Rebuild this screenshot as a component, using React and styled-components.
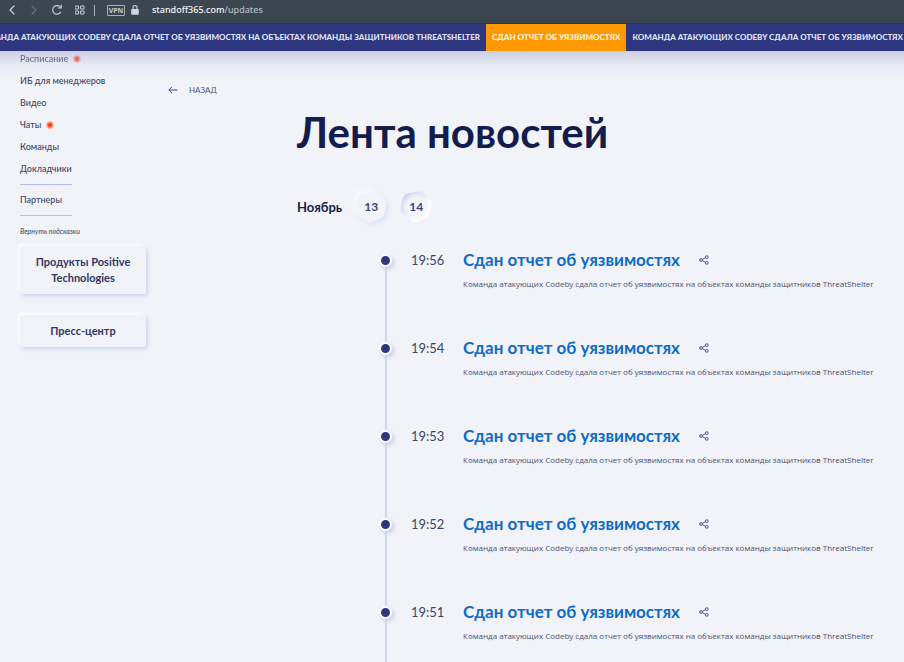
import React from "react";
import styled, { createGlobalStyle } from "styled-components";

const GlobalStyle = createGlobalStyle`
  * { box-sizing: border-box; }
  body {
    margin: 0;
    background: #f1f3f8;
    color: #3d4468;
    font-family: Lato, "Open Sans", sans-serif;
    overflow: hidden;
  }
  a { color: inherit; text-decoration: none; }
  button { border: 0; padding: 0; background: none; font: inherit; color: inherit; cursor: pointer; }
`;

const Page = styled.div`
  display: flex;
  flex-direction: column;
  min-height: 100vh;
`;

const AddressBar = styled.header`
  display: flex;
  align-items: center;
  height: 24px;
  padding: 0 8px 3px;
  background: #3b4651;
  color: #c5cad0;
  border-bottom: 1px solid #2a3045;
`;

const BrowserButton = styled.button`
  display: flex;
  width: ${(p) => p.$width}px;
  margin-right: ${(p) => p.$gap}px;
  color: ${(p) => (p.$muted ? "#67717b" : "#c9ced3")};
`;

const BarDivider = styled.span`
  width: 1px;
  height: 11px;
  margin-right: 12px;
  background: #a9b0b7;
`;

const VpnBadge = styled.span`
  width: 18px;
  height: 11px;
  margin-right: 6px;
  border: 1px solid #a9b0b7;
  border-radius: 1px;
  font: 700 7px/9px "Open Sans", sans-serif;
  text-align: center;
`;

const Address = styled.span`
  margin-left: 13px;
  font: 500 9px/14px "Noto Sans", sans-serif;
  color: #b4bac1;
`;

const Host = styled.span`
  color: #f5f6f7;
`;

const Ticker = styled.div`
  position: relative;
  z-index: 1;
  display: flex;
  height: 27px;
  overflow: hidden;
  background: #2d367f;
`;

const TickerShade = styled.div`
  position: relative;
  z-index: 1;
  height: 28px;
  margin-bottom: -28px;
  background: linear-gradient(rgba(45, 56, 140, 0.2), rgba(110, 120, 190, 0.07) 50%, rgba(241, 243, 248, 0));
  pointer-events: none;
`;

const TickerItem = styled.span`
  display: flex;
  flex: none;
  align-items: center;
  justify-content: flex-end;
  width: ${(p) => (p.$leading ? "486px" : "auto")};
  padding: 0 6px 2px;
  overflow: hidden;
  background: ${(p) => (p.$accent ? "#ff9900" : "transparent")};
  color: ${(p) => (p.$accent ? "#fff3df" : "#dfe2f2")};
  font-size: 8px;
  line-height: 12px;
  font-weight: 900;
  text-transform: uppercase;
  white-space: nowrap;
`;

const Body = styled.div`
  display: grid;
  grid-template-columns: 148px minmax(0, 1fr);
  column-gap: 20px;
`;

const Sidebar = styled.aside`
  padding-left: 20px;
`;

const Menu = styled.nav`
  display: flex;
  flex-direction: column;
  align-items: flex-start;
  gap: 6px;
`;

const MenuLink = styled.a`
  display: flex;
  align-items: center;
  gap: 5px;
  font-size: 9px;
  line-height: 16px;
  font-weight: 500;
  color: #3d4468;
  opacity: ${(p) => (p.$faded ? 0.75 : 1)};
`;

const LiveDot = styled.span`
  width: 8px;
  height: 8px;
  border-radius: 50%;
  background: radial-gradient(circle, #ff3d14 0 25%, #ff9a86 50%, #ffd3ca 72%);
`;

const MenuRule = styled.hr`
  width: 52px;
  height: 1px;
  margin: 1px 0;
  border: 0;
  background: #b4bbf0;
`;

const HintsButton = styled.button`
  display: block;
  margin-top: 9px;
  font-size: 7px;
  line-height: 10px;
  font-style: italic;
  font-weight: 500;
  color: #4a5073;
`;

const SideButton = styled.button`
  display: block;
  width: 126px;
  margin-top: ${(p) => (p.$first ? 10 : 21)}px;
  padding: 8px 12px;
  border-radius: 3px;
  background: #f1f3f8;
  box-shadow: 2px 2px 4px #cdd3ec, -2px -2px 3px #ffffff;
  font-size: 11px;
  line-height: 16px;
  font-weight: 700;
  color: #303764;
`;

const Main = styled.main`
  padding-top: 27px;
`;

const BackLink = styled.a`
  display: inline-flex;
  align-items: center;
  gap: 11px;
  height: 16px;
  font-size: 8px;
  line-height: 16px;
  color: #4d5478;
`;

const Content = styled.div`
  padding-left: 129px;
`;

const Title = styled.h1`
  margin: 6px 0 0;
  font-size: 42px;
  line-height: 56px;
  font-weight: 700;
  color: #141b4d;
`;

const DateFilter = styled.div`
  display: flex;
  align-items: center;
  gap: 13px;
  height: 32px;
  margin-top: 31px;
`;

const Month = styled.span`
  font-size: 13px;
  line-height: 16px;
  font-weight: 700;
  color: #141b4d;
`;

const DayButton = styled.button`
  display: grid;
  place-items: center;
  width: 32px;
  height: 32px;
  font-size: 12px;
  line-height: 16px;
  font-weight: 700;
  color: #3c437b;

  > * { grid-area: 1 / 1; }
  svg { overflow: visible; }
`;

const DayNumber = styled.span`
  z-index: 1;
`;

const Feed = styled.ol`
  margin: 19px 0 0;
  padding: 0 0 0 81px;
  list-style: none;
`;

const Entry = styled.li`
  display: grid;
  grid-template-columns: 14px 33px minmax(0, 1fr);
  column-gap: 19px;
  height: 88px;
`;

const Rail = styled.div`
  display: flex;
  flex-direction: column;
  align-items: center;
  background: linear-gradient(#d0d7e9, #d0d7e9) 7px ${(p) => (p.$first ? 16 : 0)}px / 2px 100% no-repeat;
`;

const RailDot = styled.span`
  width: 13px;
  height: 13px;
  margin-top: 12px;
  border: 2px solid #ffffff;
  border-radius: 50%;
  background: #2d367f;
  box-shadow: 2px 2px 4px #c5cce8;
`;

const Time = styled.time`
  font-size: 13px;
  line-height: 36px;
  color: #3d4468;
`;

const Story = styled.article`
  min-width: 0;
`;

const StoryHead = styled.div`
  display: flex;
  align-items: center;
  gap: 19px;
  height: 36px;
`;

const StoryTitle = styled.h2`
  margin: 0;
  font-size: 17px;
  line-height: 24px;
  font-weight: 700;
  color: #0f6bc4;
  white-space: nowrap;
`;

const ShareButton = styled.button`
  display: flex;
`;

const StoryText = styled.p`
  margin: 0;
  font-family: "Open Sans", Lato, sans-serif;
  font-size: 8px;
  line-height: 12px;
  color: #4a5073;
  white-space: nowrap;
`;

const HEXAGON = "M8.5 2.3 L19 0.5 Q22 0.1 24 2.2 L30 9 Q32 11.5 31.3 14.5 L29.3 23 Q28.6 26 26 27.1 L17.5 30.8 Q14.5 32 12 30 L3 23 Q0.4 21 0.8 18 L2.6 7.5 Q3.3 3.5 8.5 2.3 Z";

function DayShape({ pressed }) {
  return (
    <svg width="32" height="32" viewBox="0 0 32 32" aria-hidden="true">
      <defs>
        <filter id="raised" x="-40%" y="-40%" width="180%" height="180%">
          <feDropShadow dx="-3" dy="-3" stdDeviation="2.5" floodColor="#ffffff" floodOpacity="0.8" />
          <feDropShadow dx="2" dy="2" stdDeviation="2" floodColor="#cfd5f0" floodOpacity="0.7" />
        </filter>
        <filter id="soften" x="-20%" y="-20%" width="140%" height="140%">
          <feGaussianBlur stdDeviation="2" />
        </filter>
        <linearGradient id="edge" x1="0.1" y1="0.1" x2="0.9" y2="0.9">
          <stop offset="0" stopColor="#c9cff0" />
          <stop offset="0.45" stopColor="#e6e9f7" />
          <stop offset="0.65" stopColor="#ffffff" />
        </linearGradient>
        <clipPath id="inside"><path d={HEXAGON} /></clipPath>
      </defs>
      {pressed ? (
        <g clipPath="url(#inside)">
          <rect width="32" height="32" fill="url(#edge)" />
          <circle cx="16" cy="16" r="12" fill="#f3f4fa" filter="url(#soften)" />
        </g>
      ) : (
        <path d={HEXAGON} fill="#f2f4f9" filter="url(#raised)" />
      )}
    </svg>
  );
}

const stroke = { fill: "none", stroke: "currentColor", strokeLinecap: "round", strokeLinejoin: "round" };

const ChevronLeft = () => (
  <svg width="8" height="10" viewBox="0 0 8 10" {...stroke} strokeWidth="1.2"><path d="M6 1 L2 5 L6 9" /></svg>
);
const ChevronRight = () => (
  <svg width="8" height="10" viewBox="0 0 8 10" {...stroke} strokeWidth="1.2"><path d="M2 1 L6 5 L2 9" /></svg>
);
const Reload = () => (
  <svg width="12" height="12" viewBox="0 0 12 12" {...stroke} strokeWidth="1.2">
    <path d="M9.6 8.2 A4.3 4.3 0 1 1 9.7 3.7" />
    <path d="M10.2 1 V4 H7.2" />
  </svg>
);
const Grid = () => (
  <svg width="10" height="10" viewBox="0 0 10 10" {...stroke} strokeWidth="1">
    <path d="M0.5 1h3v3h-3z M6 1h3v3h-3z M0.5 6h3v3h-3z M6 6h3v3h-3z" />
  </svg>
);
const Lock = () => (
  <svg width="8" height="10" viewBox="0 0 8 10" aria-hidden="true">
    <rect x="0.2" y="4" width="7.6" height="5.8" rx="0.8" fill="#d3d7db" />
    <path d="M2 4.5 V2.6 a2 2 0 0 1 4 0 V4.5" fill="none" stroke="#d3d7db" strokeWidth="1.1" />
  </svg>
);
const ArrowBack = () => (
  <svg width="10" height="8" viewBox="0 0 10 8" fill="none" stroke="#3c4490" strokeWidth="1" aria-hidden="true">
    <path d="M9.5 4 H1 M4 0.8 L0.8 4 L4 7.2" />
  </svg>
);
const Share = () => (
  <svg width="10" height="10" viewBox="0 0 10 10" fill="none" stroke="#4b529a" strokeWidth="1">
    <circle cx="2" cy="5" r="1.4" />
    <circle cx="7.8" cy="2.1" r="1.4" />
    <circle cx="7.8" cy="7.9" r="1.4" />
    <path d="M3.3 4.4 L6.5 2.7 M3.3 5.6 L6.5 7.3" />
  </svg>
);

const HEADLINE = "Сдан отчет об уязвимостях";
const SUMMARY = "Команда атакующих Codeby сдала отчет об уязвимостях на объектах команды защитников ThreatShelter";
const MENU = [
  { label: "Расписание", live: true, faded: true },
  { label: "ИБ для менеджеров" },
  { label: "Видео" },
  { label: "Чаты", live: true },
  { label: "Команды" },
  { label: "Докладчики" },
];
const TIMES = ["19:56", "19:54", "19:53", "19:52", "19:51"];

export default function App() {
  return (
    <Page>
      <GlobalStyle />
      <AddressBar>
        <BrowserButton $width={8} $gap={14} aria-label="Назад в браузере"><ChevronLeft /></BrowserButton>
        <BrowserButton $width={8} $gap={13} $muted aria-label="Вперёд"><ChevronRight /></BrowserButton>
        <BrowserButton $width={12} $gap={12} aria-label="Обновить"><Reload /></BrowserButton>
        <BrowserButton $width={10} $gap={9} aria-label="Экспресс-панель"><Grid /></BrowserButton>
        <BarDivider />
        <VpnBadge>VPN</VpnBadge>
        <Lock />
        <Address><Host>standoff365.com</Host>/updates</Address>
      </AddressBar>
      <Ticker>
        <TickerItem $leading>{SUMMARY}</TickerItem>
        <TickerItem $accent>{HEADLINE}</TickerItem>
        <TickerItem>{SUMMARY}</TickerItem>
      </Ticker>
      <TickerShade />
      <Body>
        <Sidebar>
          <Menu>
            {MENU.map((item) => (
              <MenuLink key={item.label} href="#" $faded={item.faded}>
                {item.label}
                {item.live && <LiveDot />}
              </MenuLink>
            ))}
            <MenuRule />
            <MenuLink href="#">Партнеры</MenuLink>
            <MenuRule />
          </Menu>
          <HintsButton>Вернуть подсказки</HintsButton>
          <SideButton $first>Продукты Positive Technologies</SideButton>
          <SideButton>Пресс-центр</SideButton>
        </Sidebar>
        <Main>
          <BackLink href="#"><ArrowBack />НАЗАД</BackLink>
          <Content>
            <Title>Лента новостей</Title>
            <DateFilter>
              <Month>Ноябрь</Month>
              <DayButton><DayShape /><DayNumber>13</DayNumber></DayButton>
              <DayButton aria-pressed="true"><DayShape pressed /><DayNumber>14</DayNumber></DayButton>
            </DateFilter>
            <Feed>
              {TIMES.map((time, index) => (
                <Entry key={time}>
                  <Rail $first={index === 0}><RailDot /></Rail>
                  <Time>{time}</Time>
                  <Story>
                    <StoryHead>
                      <StoryTitle>{HEADLINE}</StoryTitle>
                      <ShareButton aria-label="Поделиться"><Share /></ShareButton>
                    </StoryHead>
                    <StoryText>{SUMMARY}</StoryText>
                  </Story>
                </Entry>
              ))}
            </Feed>
          </Content>
        </Main>
      </Body>
    </Page>
  );
}
